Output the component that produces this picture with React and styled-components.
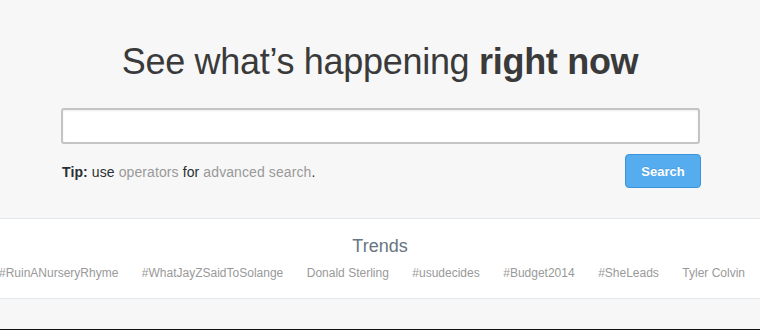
import React from "react";
import styled, { createGlobalStyle } from "styled-components";

const Global = createGlobalStyle`
  html, body { margin: 0; padding: 0; background: #f7f7f7; }
  body { font-family: "Liberation Sans", Arial, sans-serif; overflow: hidden; }
  * { box-sizing: border-box; }
`;

const Page = styled.div`
  width: 760px;
  height: 330px;
  background: #f7f7f7;
  border-bottom: 1px solid #111;
  display: flex;
  flex-direction: column;
  overflow: hidden;
`;

const Hero = styled.section`
  width: 640px;
  margin: 0 auto;
  padding-top: 41px;
  height: 218px;
`;

const Title = styled.h1`
  margin: 0;
  text-align: center;
  font-size: 36px;
  line-height: 42px;
  font-weight: 400;
  color: #3a3a3a;
  letter-spacing: -0.3px;
  b { font-weight: 700; }
`;

const SearchInput = styled.input`
  display: block;
  margin: 25px 0 0 1px;
  width: 639px;
  height: 36px;
  border: 2px solid #c4c4c4;
  border-radius: 3px;
  background: #fff;
  box-shadow: inset 0 1px 2px rgba(0,0,0,0.08);
  outline: none;
`;

const Row = styled.div`
  display: flex;
  justify-content: space-between;
  align-items: center;
  margin-top: 10px;
  padding-left: 2px;
`;

const Tip = styled.p`
  margin: 0;
  padding-top: 2px;
  font-size: 14px;
  letter-spacing: 0.1px;
  color: #292f33;
  b { font-weight: 700; }
`;

const Link = styled.a`
  color: #999;
  text-decoration: none;
`;

const Button = styled.button`
  width: 76px;
  height: 34px;
  margin-right: -1px;
  background: #55acee;
  border: 1px solid #3b94d9;
  border-radius: 4px;
  color: #fff;
  font-family: "Liberation Sans", Arial, sans-serif;
  font-weight: 700;
  font-size: 13px;
  text-shadow: 0 -1px 0 rgba(0,0,0,0.1);
`;

const Trends = styled.section`
  height: 81px;
  background: #fff;
  border-top: 1px solid #e1e8ed;
  border-bottom: 1px solid #e1e8ed;
  display: flex;
  flex-direction: column;
  align-items: center;
  padding-top: 17px;
`;

const TrendsTitle = styled.h2`
  margin: 0;
  font-size: 18px;
  line-height: 20px;
  font-weight: 400;
  color: #66757f;
`;

const TrendList = styled.ul`
  list-style: none;
  margin: 9px 0 0;
  padding: 0 16px 0 0;
  display: flex;
  gap: 23.5px;
  white-space: nowrap;
  justify-content: center;
  width: 760px;
`;

const Trend = styled.li`
  font-size: 12px;
  line-height: 16px;
  color: #999;
  flex: none;
`;

const trends = [
  "#RuinANurseryRhyme",
  "#WhatJayZSaidToSolange",
  "Donald Sterling",
  "#usudecides",
  "#Budget2014",
  "#SheLeads",
  "Tyler Colvin",
];

export default function App() {
  return (
    <Page>
      <Global />
      <Hero>
        <Title>
          See what’s happening <b>right now</b>
        </Title>
        <SearchInput type="text" />
        <Row>
          <Tip>
            <b>Tip:</b> use <Link href="#">operators</Link> for{" "}
            <Link href="#">advanced search</Link>.
          </Tip>
          <Button>Search</Button>
        </Row>
      </Hero>
      <Trends>
        <TrendsTitle>Trends</TrendsTitle>
        <TrendList>
          {trends.map((t) => (
            <Trend key={t}>{t}</Trend>
          ))}
        </TrendList>
      </Trends>
    </Page>
  );
}
